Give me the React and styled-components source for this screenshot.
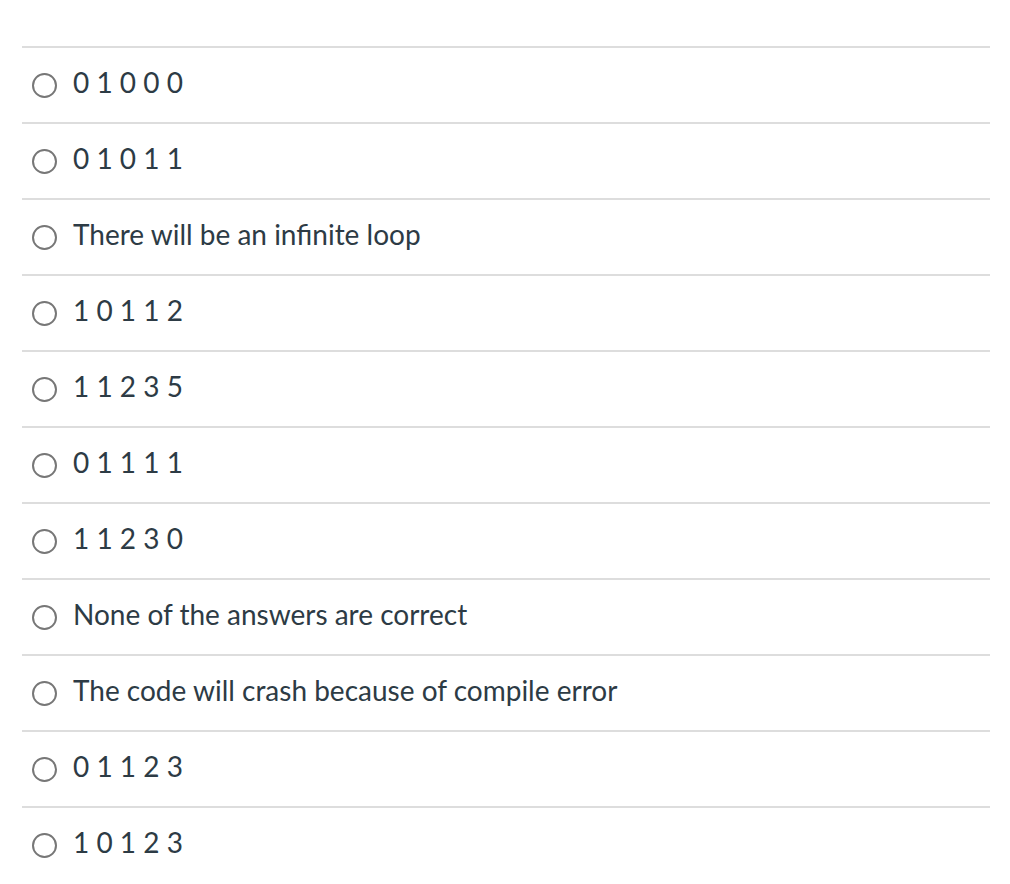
import React from "react";
import styled, { createGlobalStyle } from "styled-components";

const Global = createGlobalStyle`
  html, body { margin: 0; padding: 0; background: #fff; }
  body { font-family: Lato, "Open Sans", sans-serif; }
`;

const List = styled.div`
  padding: 46px 20px 0 22px;
  display: flex;
  flex-direction: column;
`;

const Row = styled.label`
  display: flex;
  align-items: center;
  height: 74px;
  border-top: 2px solid #dddddd;
  padding-left: 10px;
  gap: 16px;
  cursor: pointer;
`;

const Radio = styled.span`
  width: 25px;
  height: 25px;
  border: 2px solid #777777;
  border-radius: 50%;
  flex: none;
  box-sizing: border-box;
  margin-top: 1px;
`;

const Text = styled.span`
  font-family: Lato, sans-serif;
  font-size: 28px;
  line-height: 1;
  color: #2d3b45;
  white-space: pre;
  margin-bottom: 7px;
`;

const options = [
  "0 1 0 0 0",
  "0 1 0 1 1",
  "There will be an infinite loop",
  "1 0 1 1 2",
  "1 1 2 3 5",
  "0 1 1 1 1",
  "1 1 2 3 0",
  "None of the answers are correct",
  "The code will crash because of compile error",
  "0 1 1 2 3",
  "1 0 1 2 3",
];

export default function App() {
  return (
    <>
      <Global />
      <List>
        {options.map((o, i) => (
          <Row key={i}>
            <Radio />
            <Text>{o}</Text>
          </Row>
        ))}
      </List>
    </>
  );
}
